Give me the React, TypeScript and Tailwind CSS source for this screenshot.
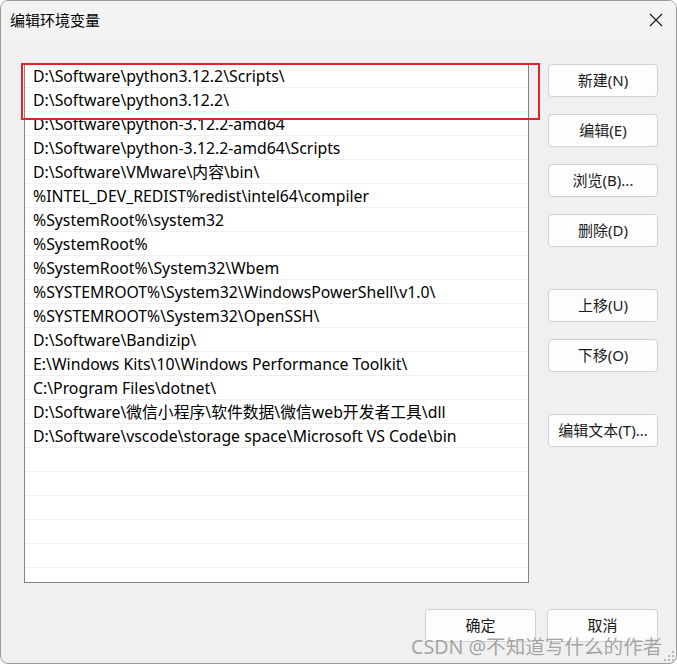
import React from "react";

const paths = [
  "D:\\Software\\python3.12.2\\Scripts\\",
  "D:\\Software\\python3.12.2\\",
  "D:\\Software\\python-3.12.2-amd64",
  "D:\\Software\\python-3.12.2-amd64\\Scripts",
  "D:\\Software\\VMware\\内容\\bin\\",
  "%INTEL_DEV_REDIST%redist\\intel64\\compiler",
  "%SystemRoot%\\system32",
  "%SystemRoot%",
  "%SystemRoot%\\System32\\Wbem",
  "%SYSTEMROOT%\\System32\\WindowsPowerShell\\v1.0\\",
  "%SYSTEMROOT%\\System32\\OpenSSH\\",
  "D:\\Software\\Bandizip\\",
  "E:\\Windows Kits\\10\\Windows Performance Toolkit\\",
  "C:\\Program Files\\dotnet\\",
  "D:\\Software\\微信小程序\\软件数据\\微信web开发者工具\\dll",
  "D:\\Software\\vscode\\storage space\\Microsoft VS Code\\bin",
];

const rows = [...paths, ...Array(6).fill("")];

function Btn({ label, className = "" }: { label: string; className?: string }) {
  return (
    <button
      className={`h-[33px] w-[110px] rounded-[4px] border border-[#d1d1d1] bg-[#fdfdfd] text-[15px] text-[#1a1a1a] ${className}`}
    >
      {label}
    </button>
  );
}

export default function App() {
  return (
    <div
      className="relative h-[664px] w-[677px] overflow-hidden rounded-lg border border-[#9a9a9a] bg-[#f0f0f0] text-black"
      style={{ fontFamily: '"Noto Sans", "Noto Sans CJK SC", sans-serif' }}
    >
      {/* title bar */}
      <div className="flex h-[38px] items-center justify-between bg-[#f3f3f3] pl-[9px] pr-[13px]">
        <span className="text-[15px] leading-none">编辑环境变量</span>
        <svg width="14" height="14" viewBox="0 0 14 14" className="text-[#1a1a1a]">
          <path d="M1 1 L13 13 M13 1 L1 13" stroke="currentColor" strokeWidth="1.1" />
        </svg>
      </div>

      <div className="flex pl-[23px] pt-[24px]">
        {/* path list */}
        <div className="relative h-[520px] w-[505px] overflow-hidden border border-[#838383] bg-white">
          {rows.map((p, i) => (
            <div
              key={i}
              className="flex h-[24px] items-center border-b border-[#efefef] pl-[8px] pt-[3px] text-[15.8px] leading-none whitespace-nowrap"
            >
              {p}
            </div>
          ))}
        </div>
        {/* highlight on the two new entries */}
        <div className="pointer-events-none absolute left-[20px] top-[62px] h-[57px] w-[519px] border-2 border-[#e5202b]" />

        {/* side buttons */}
        <div className="ml-[19px] flex flex-col pt-[1px]">
          <Btn label="新建(N)" />
          <Btn label="编辑(E)" className="mt-[17px]" />
          <Btn label="浏览(B)..." className="mt-[17px]" />
          <Btn label="删除(D)" className="mt-[17px]" />
          <Btn label="上移(U)" className="mt-[42px]" />
          <Btn label="下移(O)" className="mt-[17px]" />
          <Btn label="编辑文本(T)..." className="mt-[42px]" />
        </div>
      </div>

      {/* dialog buttons */}
      <div className="mt-[26px] flex justify-end gap-[11px] pr-[18px]">
        <Btn label="确定" className="w-[111px] border-[#1a6fc4]" />
        <Btn label="取消" className="w-[111px]" />
      </div>

      <span className="absolute left-[410px] top-[636px] text-[19.6px] leading-none text-[#8a8a8a]/80 [text-shadow:0_0_1px_#ffffff]">
        CSDN @不知道写什么的作者
      </span>

      {/* resize grip */}
      <svg width="12" height="12" viewBox="0 0 12 12" className="absolute bottom-[1px] right-[1px] text-[#b5b5b5]">
        <rect x="9" y="1" width="2" height="2" fill="currentColor" />
        <rect x="5" y="5" width="2" height="2" fill="currentColor" />
        <rect x="9" y="5" width="2" height="2" fill="currentColor" />
        <rect x="1" y="9" width="2" height="2" fill="currentColor" />
        <rect x="5" y="9" width="2" height="2" fill="currentColor" />
        <rect x="9" y="9" width="2" height="2" fill="currentColor" />
      </svg>
    </div>
  );
}
